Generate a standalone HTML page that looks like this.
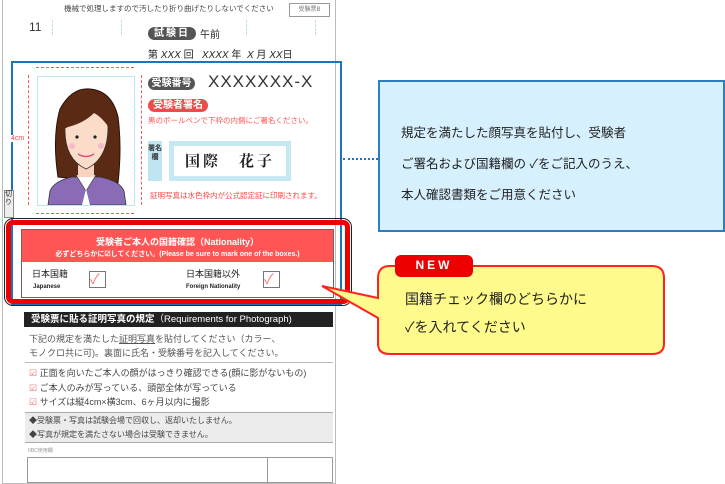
<!DOCTYPE html>
<html><head><meta charset="utf-8"><style>
*{margin:0;padding:0;box-sizing:border-box}
body{width:725px;height:482px;background:#fff;position:relative;overflow:hidden;font-family:"Liberation Sans","Noto Sans CJK JP",sans-serif;color:#222}
.a{position:absolute;white-space:nowrap}
.pill{position:absolute;background:#555;color:#fff;border-radius:7px;font-size:10px;font-weight:bold;text-align:center;line-height:13px}
</style></head><body>
<!-- paper -->
<div class="a" style="left:2px;top:-2px;width:334px;height:486px;border:1px solid #bbb"></div>
<div class="a" style="left:64px;top:3px;font-size:7.5px;color:#444">機械で処理しますので汚したり折り曲げたりしないでください</div>
<div class="a" style="left:289px;top:3px;width:41px;height:14px;border:1px solid #999;font-size:6px;color:#777;text-align:center;line-height:12px">受験票B</div>
<div class="a" style="left:29px;top:20px;font-size:12px;color:#333">11</div>
<div class="a" style="left:52px;top:20px;width:70px;height:15px;border:1px dashed #bde;border-top:none;border-bottom:none"></div>
<div class="a" style="left:246px;top:20px;width:70px;height:15px;border:1px dashed #bde;border-top:none;border-bottom:none"></div>
<div class="pill" style="left:148px;top:27px;width:48px;height:13px;letter-spacing:2px">試験日</div>
<div class="a" style="left:200px;top:26px;font-size:10px">午前</div>
<div class="a" style="left:148px;top:46px;font-size:10px">第 <i>XXX</i> 回 &nbsp; <i>XXXX</i> 年 &nbsp;<i>X</i> 月 <i>XX</i>日</div>

<!-- blue box -->
<div class="a" style="left:11px;top:61px;width:331px;height:244px;border:2px solid #1b75bb"></div>
<!-- photo dims -->
<div class="a" style="left:36px;top:67px;width:98px;border-top:1px dashed #f55"></div>
<div class="a" style="left:36px;top:213px;width:98px;border-top:1px dashed #f55"></div>
<div class="a" style="left:28px;top:75px;height:130px;border-left:1px dashed #f55"></div>
<div class="a" style="left:141px;top:75px;height:130px;border-left:1px dashed #f55"></div>
<div class="a" style="left:11px;top:135px;font-size:7px;color:#f44;background:#fff">4cm</div>
<div class="a" style="left:37px;top:76px;width:98px;height:130px;border:1px solid #bde5f0;background:#fff">
<svg width="96" height="128" viewBox="0 0 96 128">
<path d="M20 100 Q14 60 22 32 Q34 10 52 12 Q74 14 80 40 Q84 70 80 106 Z" fill="#5a2a14" stroke="#2a1208" stroke-width="1"/>
<path d="M10 128 L12 114 Q16 104 34 100 L62 100 Q82 104 86 114 L88 128 Z" fill="#8a6bb5" stroke="#333" stroke-width="0.8"/>
<path d="M38 98 L48 114 L58 98 Z" fill="#fff" stroke="#333" stroke-width="0.6"/>
<path d="M44 128 L48 112 L52 128Z" fill="#fff"/>
<path d="M40 88 L40 100 L56 100 L56 88Z" fill="#f7d3c0"/>
<path d="M27 50 Q26 82 48 92 Q70 82 70 50 Q68 34 48 32 Q30 34 27 50Z" fill="#fbdcc8" stroke="#333" stroke-width="0.8"/>
<path d="M26 52 Q30 30 48 28 Q66 28 72 52 Q64 40 56 36 Q46 46 30 50Z" fill="#5a2a14"/>
<circle cx="39" cy="60" r="1.6" fill="#222"/><circle cx="57" cy="60" r="1.6" fill="#222"/>
<circle cx="34" cy="69" r="3" fill="#f7b8c8"/><circle cx="63" cy="69" r="3" fill="#f7b8c8"/>
<path d="M40 77 Q48 82 56 77" stroke="#e0507a" stroke-width="1.4" fill="none"/>
</svg></div>
<div class="pill" style="left:148px;top:77px;width:47px;height:13px">受験番号</div>
<div class="a" style="left:208px;top:72px;font-size:17px;color:#333;letter-spacing:1px">XXXXXXX-X</div>
<div class="pill" style="left:148px;top:99px;width:60px;height:13px;background:#ee4c4c">受験者署名</div>
<div class="a" style="left:148px;top:115px;font-size:7.5px;color:#f55">黒のボールペンで下枠の内側にご署名ください。</div>
<div class="a" style="left:148px;top:141px;width:14px;height:40px;background:#bfe5f0;font-size:7px;line-height:9px;text-align:center;padding-top:3px;color:#333;font-weight:bold;white-space:normal">署名欄</div>
<div class="a" style="left:169px;top:141px;width:122px;height:40px;border:5px solid #c6e8f2;background:#fff;font-family:'Noto Serif CJK SC',serif;font-weight:bold;font-size:15px;line-height:30px;padding-left:11px;letter-spacing:3px">国際　花子</div>
<div class="a" style="left:150px;top:190px;font-size:7.5px;color:#f44">証明写真は水色枠内が公式認定証に印刷されます。</div>

<!-- red box -->
<div class="a" style="left:4px;top:218px;width:348px;height:88px;border:1.5px solid #222;border-radius:9px"></div>
<div class="a" style="left:6px;top:220px;width:344px;height:84px;border:5px solid #e00;border-radius:7px"></div>
<div class="a" style="left:21px;top:229px;width:313px;height:69px;border:1px solid #666;background:#fff"></div>
<div class="a" style="left:22px;top:230px;width:311px;height:32px;background:#f55;color:#fff;text-align:center;font-weight:bold">
<div style="font-size:9px;margin-top:5px">受験者ご本人の国籍確認（Nationality）</div>
<div style="font-size:7px;margin-top:1px">必ずどちらかに☑してください。(Please be sure to mark one of the boxes.)</div></div>
<div class="a" style="left:32px;top:267px;font-size:9px">日本国籍</div>
<div class="a" style="left:33px;top:284px;font-size:6px;font-weight:bold">Japanese</div>
<div class="a" style="left:89px;top:271px;width:17px;height:17px;border:1.5px solid #777;color:#f77;font-size:14px;line-height:14px">✓</div>
<div class="a" style="left:186px;top:267px;font-size:9px">日本国籍以外</div>
<div class="a" style="left:186px;top:284px;font-size:6px;font-weight:bold">Foreign Nationality</div>
<div class="a" style="left:263px;top:271px;width:17px;height:17px;border:1.5px solid #777;color:#f77;font-size:14px;line-height:14px">✓</div>

<!-- requirements -->
<div class="a" style="left:24px;top:312px;width:309px;height:15px;background:#222;color:#fff;font-size:9.5px;line-height:15px;padding-left:7px"><b>受験票に貼る証明写真の規定</b>（Requirements for Photograph)</div>
<div class="a" style="left:29px;top:332px;font-size:9px;color:#555;line-height:14px">下記の規定を満たした<u>証明写真</u>を貼付してください（カラー、<br>モノクロ共に可)。裏面に氏名・受験番号を記入してください。</div>
<div class="a" style="left:25px;top:362px;width:308px;border-top:1px solid #bbb"></div>
<div class="a" style="left:29px;top:366px;font-size:9px;color:#444;line-height:14.5px"><span style="color:#e66">☑</span> 正面を向いたご本人の顔がはっきり確認できる(顔に影がないもの)<br><span style="color:#e66">☑</span> ご本人のみが写っている、頭部全体が写っている<br><span style="color:#e66">☑</span> サイズは縦4cm×横3cm、6ヶ月以内に撮影</div>
<div class="a" style="left:25px;top:412px;width:308px;height:31px;background:#ececec;border-top:1px solid #aaa;border-bottom:1px solid #aaa;font-size:8px;color:#444;line-height:14px;padding:1px 0 0 4px">◆受験票・写真は試験会場で回収し、返却いたしません。<br>◆写真が規定を満たさない場合は受験できません。</div>
<div class="a" style="left:28px;top:447px;font-size:5px;color:#999">IIBC使用欄</div>
<div class="a" style="left:27px;top:457px;width:306px;height:26px;border:1px solid #999"></div>
<div class="a" style="left:267px;top:457px;height:26px;border-left:1px solid #999"></div>
<div class="a" style="left:4px;top:190px;width:10px;height:28px;border:1px solid #888;background:#eee;font-size:7px;line-height:8px;white-space:normal">切り</div>

<!-- blue callout -->
<div class="a" style="left:343px;top:158px;width:35px;border-top:2px dotted #1b75bb"></div>
<div class="a" style="left:378px;top:80px;width:347px;height:152px;background:#d7f0fd;border:2px solid #2a7fc2"></div>
<div class="a" style="left:401px;top:118px;font-size:12.5px;line-height:31px;color:#222">規定を満たした顔写真を貼付し、受験者<br>ご署名および国籍欄の ✓をご記入のうえ、<br>本人確認書類をご用意ください</div>

<!-- yellow callout -->
<svg class="a" style="left:320px;top:260px" width="360" height="100" viewBox="0 0 360 100">
<path d="M58 18 Q58 6 70 6 L332 6 Q344 6 344 18 L344 84 Q344 94 332 94 L70 94 Q58 94 58 84 L58 58 L2 26 L58 38 Z" fill="#fffa8c" stroke="#f22" stroke-width="2"/>
</svg>
<div class="a" style="left:395px;top:255px;width:78px;height:22px;background:#e00;border-radius:6px;color:#fff;font-weight:bold;font-size:12px;text-align:center;line-height:20px;letter-spacing:3px">NEW</div>
<div class="a" style="left:405px;top:285px;font-size:14px;line-height:28px;color:#222">国籍チェック欄のどちらかに<br>✓を入れてください</div>
</body></html>
